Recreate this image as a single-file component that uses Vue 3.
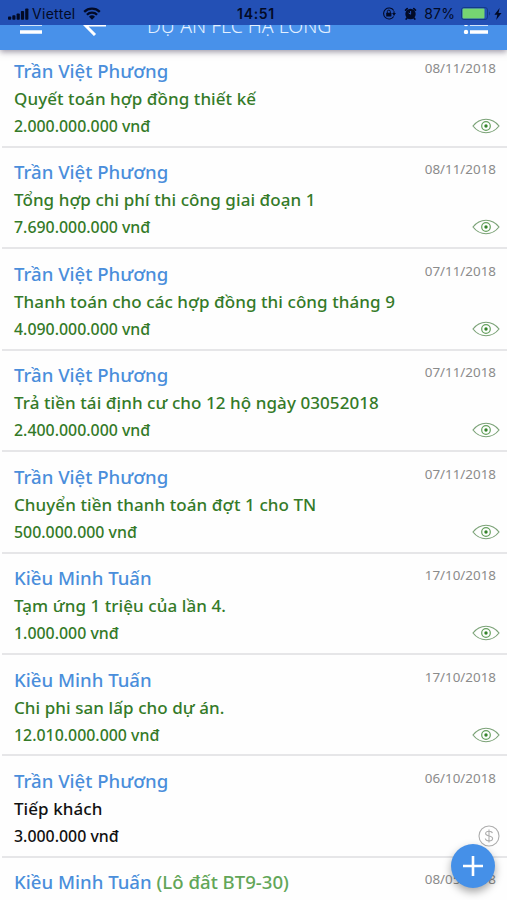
<template>
  <div class="screen">
    <div class="status-bar">
      <div class="status-side">
        <svg class="signal" width="21" height="12" viewBox="0 0 21 12">
          <rect x="0" y="8.4" width="3.2" height="3.4" rx="0.8" />
          <rect x="4.3" y="7.2" width="3.2" height="4.6" rx="0.8" />
          <rect x="8.6" y="5.4" width="3.2" height="6.4" rx="0.8" />
          <rect x="12.9" y="3" width="3.2" height="8.8" rx="0.8" />
          <rect x="17.2" y="0.5" width="3.2" height="11.3" rx="0.8" />
        </svg>
        <span class="carrier">Viettel</span>
        <svg class="wifi" width="18" height="13" viewBox="0 0 18 13">
          <path d="M1.2 4.8a11.2 11.2 0 0 1 15.6 0M3.9 7.7a7.3 7.3 0 0 1 10.2 0" fill="none" stroke="#020a26" stroke-width="2.3" />
          <path d="M9 12.8L6 9.8a4.3 4.3 0 0 1 6 0z" />
        </svg>
      </div>
      <span class="clock">14:51</span>
      <div class="status-side status-right">
        <svg width="14" height="13" viewBox="0 0 14 13">
          <path d="M11.7 3.5a5.5 5.5 0 1 0 0 6" fill="none" stroke="#020a26" stroke-width="1.1" />
          <path d="M12 4.2v4.3" stroke="#020a26" stroke-width="1.1" />
          <path d="M10 6h4l-2 2.6z" />
          <rect x="4.2" y="5.7" width="5.2" height="3.9" rx="0.5" />
          <path d="M5.3 6V4.6a1.5 1.5 0 0 1 3 0V6" fill="none" stroke="#020a26" />
        </svg>
        <svg class="alarm" width="13" height="13" viewBox="0 0 13 13">
          <circle cx="6.5" cy="7" r="5.2" />
          <path d="M1.6 3.2l1.6-1.6M11.4 3.2L9.8 1.6M3.2 10.8l-1 1.2M9.8 10.8l1 1.2" stroke="#020a26" stroke-width="1.7" stroke-linecap="round" />
          <path d="M6.6 4v3.2L4.6 6" fill="none" stroke="#2350b5" stroke-width="1" />
        </svg>
        <span class="percent">87%</span>
        <svg width="30" height="13" viewBox="0 0 30 13">
          <rect x="0.5" y="0.5" width="26" height="12" rx="2.5" fill="none" stroke="#153a88" />
          <rect x="1.5" y="1.5" width="22" height="10" rx="1" fill="#76d572" />
          <path d="M28 4.5a2.4 2.4 0 0 1 0 4z" fill="#153a88" />
        </svg>
        <svg class="bolt" width="8" height="12" viewBox="0 0 8 12">
          <path d="M5.6 0L0.4 6.7h2.9L2.2 12l5.3-7H4.5z" />
        </svg>
      </div>
    </div>

    <header class="nav-bar">
      <svg class="menu" width="24" height="20" viewBox="0 0 24 20">
        <path d="M1 2h22M1 10h22M1 18h22" stroke="#fff" stroke-width="3.4" />
      </svg>
      <svg class="back" width="24" height="22" viewBox="0 0 24 22">
        <path d="M23 11H2M12 1L2 11l10 10" fill="none" stroke="#fff" stroke-width="3" />
      </svg>
      <h1 class="title">DỰ ÁN FLC HẠ LONG</h1>
      <svg class="options" width="26" height="20" viewBox="0 0 26 20">
        <path d="M7 2h18M7 10h18M7 18h18" stroke="#fff" stroke-width="3.4" />
        <g fill="#fff">
          <circle cx="3" cy="2" r="2.2" />
          <circle cx="3" cy="10" r="2.2" />
          <circle cx="3" cy="18" r="2.2" />
        </g>
      </svg>
    </header>

    <main class="list">
      <article v-for="(item, i) in items" :key="i" class="row" :class="{ seen: item.seen }">
        <div class="info">
          <div class="name">{{ item.name }} <span v-if="item.lot" class="lot">{{ item.lot }}</span></div>
          <div class="content">{{ item.content }}</div>
          <div class="amount">{{ item.amount }}</div>
        </div>
        <div class="meta">
          <time class="date">{{ item.date }}</time>
          <svg v-if="item.seen" class="eye" width="28" height="16" viewBox="0 0 28 16">
            <path d="M1 8C8-1 20-1 27 8C20 17 8 17 1 8z" fill="none" stroke="#7ba277" stroke-width="1.2" />
            <circle cx="14" cy="8" r="4.3" fill="none" stroke="#65a15d" stroke-width="1.2" />
            <circle cx="14" cy="8" r="1.7" fill="#34832a" />
          </svg>
          <svg v-else class="coin" width="22" height="22" viewBox="0 0 22 22">
            <circle cx="11" cy="11" r="10" fill="none" stroke="#adadad" stroke-width="1.1" />
            <path d="M14.4 8.2C14 6.7 12.7 6.2 11 6.2c-2 0-3.4.9-3.4 2.4 0 3.3 7 1.5 7 4.8 0 1.5-1.5 2.5-3.6 2.5-2 0-3.4-.8-3.7-2.4M11 4.4v13.2" fill="none" stroke="#adadad" stroke-width="1.1" />
          </svg>
        </div>
      </article>
    </main>

    <button class="add" aria-label="add">
      <svg width="20" height="20" viewBox="0 0 20 20">
        <path d="M10 0v20M0 10h20" stroke="#fff" stroke-width="2.6" />
      </svg>
    </button>
  </div>
</template>

<script setup>
const items = [
  { name: 'Trần Việt Phương', content: 'Quyết toán hợp đồng thiết kế', amount: '2.000.000.000 vnđ', date: '08/11/2018', seen: true },
  { name: 'Trần Việt Phương', content: 'Tổng hợp chi phí thi công giai đoạn 1', amount: '7.690.000.000 vnđ', date: '08/11/2018', seen: true },
  { name: 'Trần Việt Phương', content: 'Thanh toán cho các hợp đồng thi công tháng 9', amount: '4.090.000.000 vnđ', date: '07/11/2018', seen: true },
  { name: 'Trần Việt Phương', content: 'Trả tiền tái định cư cho 12 hộ ngày 03052018', amount: '2.400.000.000 vnđ', date: '07/11/2018', seen: true },
  { name: 'Trần Việt Phương', content: 'Chuyển tiền thanh toán đợt 1 cho TN', amount: '500.000.000 vnđ', date: '07/11/2018', seen: true },
  { name: 'Kiều Minh Tuấn', content: 'Tạm ứng 1 triệu của lần 4.', amount: '1.000.000 vnđ', date: '17/10/2018', seen: true },
  { name: 'Kiều Minh Tuấn', content: 'Chi phi san lấp cho dự án.', amount: '12.010.000.000 vnđ', date: '17/10/2018', seen: true },
  { name: 'Trần Việt Phương', content: 'Tiếp khách', amount: '3.000.000 vnđ', date: '06/10/2018', seen: false },
  { name: 'Kiều Minh Tuấn', lot: '(Lô đất BT9-30)', content: '', amount: '', date: '08/05/2018', seen: true },
];
</script>

<style>
body {
  margin: 0;
  overflow: hidden;
}
</style>

<style scoped>
.screen {
  position: relative;
  width: 507px;
  height: 900px;
  overflow: hidden;
  display: flex;
  flex-direction: column;
  background: #fefefe;
  font-family: "Noto Sans", "Open Sans", sans-serif;
}

.screen svg {
  display: block;
  flex: none;
}

.status-bar {
  position: relative;
  z-index: 3;
  flex: none;
  height: 25px;
  box-sizing: border-box;
  padding: 2px 5px 0 8px;
  display: grid;
  grid-template-columns: 1fr auto 1fr;
  align-items: center;
  background: #2350b5;
  color: #020a26;
  fill: #020a26;
  font-family: Inter, "Liberation Sans", sans-serif;
  font-size: 14px;
  line-height: 22px;
}

.status-side {
  display: flex;
  align-items: center;
}

.carrier {
  margin: 0 7px 0 3px;
  letter-spacing: 0.3px;
}

.clock {
  padding-left: 2px;
  font-weight: 600;
  letter-spacing: 0.7px;
}

.status-right {
  justify-content: flex-end;
}

.alarm {
  margin: 0 7px 0 8px;
}

.percent {
  margin-right: 6px;
  letter-spacing: 0.1px;
}

.bolt {
  margin-left: 3px;
}

.nav-bar {
  position: relative;
  z-index: 2;
  flex: none;
  height: 50px;
  margin-top: -25px;
  box-sizing: border-box;
  padding: 0 18px 0 19px;
  display: flex;
  align-items: flex-start;
  background: #4891ea;
  box-shadow: 0 2px 6px rgba(60, 50, 80, 0.5);
}

.menu {
  margin-top: 14px;
}

.back {
  margin: 14px 0 0 40px;
}

.title {
  margin: 10px 0 0 40px;
  font-size: 19.4px;
  line-height: 32px;
  font-weight: 300;
  color: #e4f0ff;
  white-space: nowrap;
}

.options {
  margin: 14px 0 0 auto;
}

.list {
  flex: 1;
  margin-top: -3.6px;
  padding-left: 2px;
}

.row {
  height: 101.43px;
  box-sizing: border-box;
  padding: 11.6px 7px 0 12px;
  display: flex;
  justify-content: space-between;
  border-bottom: 2px solid #e6e6e8;
  color: #111;
}

.row.seen {
  color: #347a28;
}

.info {
  white-space: nowrap;
}

.name {
  padding-bottom: 2px;
  font-size: 18.6px;
  line-height: 25px;
  font-weight: 500;
  color: #4a8edb;
}

.lot {
  color: #62a658;
}

.content {
  font-size: 17px;
  line-height: 27px;
  font-weight: 500;
  letter-spacing: 0.07px;
}

.amount {
  font-size: 15.9px;
  line-height: 28px;
  font-weight: 500;
}

.meta {
  display: flex;
  flex-direction: column;
  align-items: flex-end;
}

.date {
  margin-right: 4px;
  font-size: 13.4px;
  line-height: 20px;
  color: #8b8b8b;
}

.eye {
  margin-top: 40px;
}

.coin {
  margin-top: 37px;
}

.add {
  position: absolute;
  right: 12px;
  bottom: 12px;
  width: 44px;
  height: 44px;
  padding: 0;
  border: 0;
  border-radius: 50%;
  display: flex;
  align-items: center;
  justify-content: center;
  background: #4590e8;
  box-shadow: 0 4px 9px rgba(0, 0, 0, 0.35);
}
</style>
